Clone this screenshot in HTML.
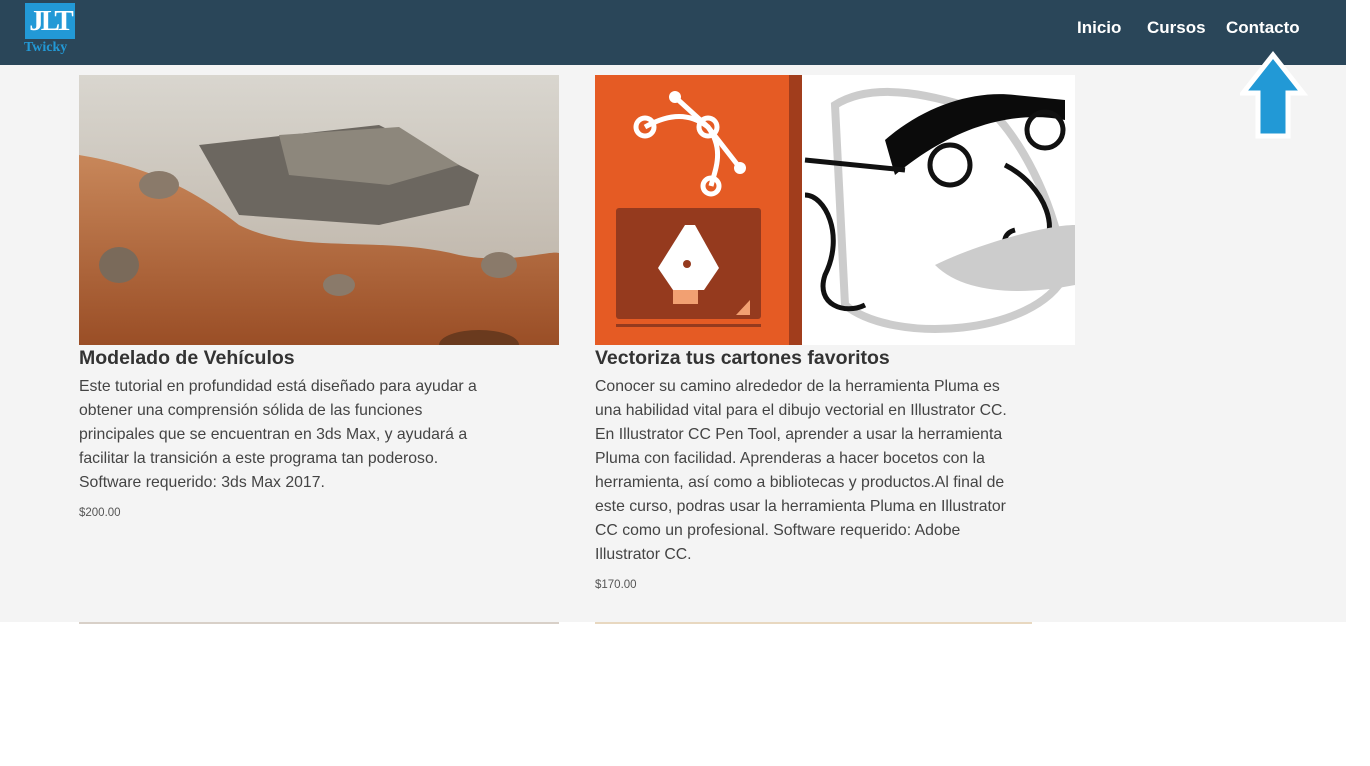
<!DOCTYPE html>
<html><head><meta charset="utf-8"><style>
html,body{margin:0;padding:0;width:1370px;height:766px;overflow:hidden;background:#fff;font-family:"Liberation Sans",sans-serif}
.hdr{position:absolute;left:0;top:0;width:1346px;height:65px;background:#2a4659}
.main{position:absolute;left:0;top:65px;width:1346px;height:557px;background:#f4f4f4}
.nav a{position:absolute;top:18px;color:#fff;font-weight:bold;font-size:17px;text-decoration:none}
.card{position:absolute;top:75px;width:480px}
.img{width:480px;height:270px;overflow:hidden}
h2{margin:0;font-size:19.5px;font-weight:bold;color:#333;position:absolute;top:272px;white-space:nowrap}
p{margin:0;position:absolute;top:300px;font-size:15.8px;line-height:24px;color:#444;white-space:nowrap}
.pr{position:absolute;font-size:11.5px;color:#555}
</style></head><body>
<div class="hdr">
 <div style="position:absolute;left:25px;top:3px;width:50px;height:36px;background:#2299d6"></div>
 <div style="position:absolute;left:25px;top:5px;width:50px;text-align:center;font-family:'Liberation Serif',serif;font-weight:bold;font-size:29px;color:#fff;letter-spacing:-3px">JLT</div>
 <div style="position:absolute;left:24px;top:40px;font-family:'Liberation Serif',serif;font-weight:bold;font-size:14px;color:#2299d6">Twicky</div>
 <div class="nav"><a style="left:1077px">Inicio</a><a style="left:1147px">Cursos</a><a style="left:1226px">Contacto</a></div>
</div>
<div class="main"></div>
<svg style="position:absolute;left:1240px;top:50px" width="70" height="90"><polygon points="33,5 63,43 48,43 48,86 18,86 18,43 3,43" fill="#2299d6" stroke="#fff" stroke-width="5" stroke-linejoin="miter"/></svg>

<div class="card" style="left:79px">
 <div class="img"><svg width="480" height="270">
  <defs><linearGradient id="s" x1="0" y1="0" x2="0" y2="1"><stop offset="0" stop-color="#d9d6cf"/><stop offset="1" stop-color="#b8ada0"/></linearGradient>
  <linearGradient id="g" x1="0" y1="0" x2="0" y2="1"><stop offset="0" stop-color="#c8875a"/><stop offset="1" stop-color="#9a4e26"/></linearGradient></defs>
  <rect width="480" height="270" fill="url(#s)"/>
  <path d="M0,80 C60,90 110,110 160,150 C220,180 300,160 380,180 C430,190 470,175 480,178 L480,270 L0,270Z" fill="url(#g)"/>
  <path d="M120,70 L300,50 L400,100 L390,130 L300,150 L160,140Z" fill="#6c6760"/>
  <path d="M200,60 L320,52 L380,90 L310,110 L210,100Z" fill="#8d877c"/>
  <ellipse cx="400" cy="270" rx="40" ry="15" fill="#6a3a1e"/>
  <ellipse cx="420" cy="190" rx="18" ry="13" fill="#8a7a6a"/><ellipse cx="260" cy="210" rx="16" ry="11" fill="#8a7a6a"/><ellipse cx="80" cy="110" rx="20" ry="14" fill="#8a7a6a"/><ellipse cx="40" cy="190" rx="20" ry="18" fill="#7a6a5a"/>
 </svg></div>
 <h2>Modelado de Vehículos</h2>
 <p>Este tutorial en profundidad está diseñado para ayudar a<br>obtener una comprensión sólida de las funciones<br>principales que se encuentran en 3ds Max, y ayudará a<br>facilitar la transición a este programa tan poderoso.<br>Software requerido: 3ds Max 2017.</p>
 <div class="pr" style="top:432px">$200.00</div>
</div>

<div class="card" style="left:595px">
 <div class="img"><svg width="480" height="270">
  <rect width="480" height="270" fill="#fff"/>
  <rect width="207" height="270" fill="#e55b24"/>
  <rect x="194" width="13" height="270" fill="#a13d1c"/>
  <rect x="21" y="133" width="145" height="111" rx="3" fill="#953a1e"/>
  <rect x="21" y="249" width="145" height="3" fill="#953a1e"/>
  <g fill="none" stroke="#fff" stroke-width="5"><path d="M50,52 C75,38 95,38 113,52 C130,75 120,95 116,111"/><path d="M80,22 L113,52 L145,93"/><circle cx="50" cy="52" r="9"/><circle cx="113" cy="52" r="9"/><circle cx="116" cy="111" r="8"/></g>
  <circle cx="80" cy="22" r="6" fill="#fff"/><circle cx="145" cy="93" r="6" fill="#fff"/>
  <path d="M90,150 L100,150 L124,193 L109,215 L78,215 L63,193Z" fill="#fff"/><rect x="78" y="215" width="25" height="14" fill="#f2a072"/><circle cx="92" cy="189" r="4" fill="#953a1e"/>
  <path d="M155,225 L155,240 L141,240Z" fill="#f2a072"/>
  <path d="M240,30 C280,5 340,20 400,40 C420,60 460,120 470,200 C440,260 300,270 250,230Z" fill="none" stroke="#ccc" stroke-width="8"/>
  <path d="M290,65 C330,30 380,15 420,20 L470,25 L470,45 C420,35 360,50 300,100Z" fill="#0b0b0b"/>
  <circle cx="355" cy="90" r="20" fill="none" stroke="#111" stroke-width="5"/><circle cx="450" cy="55" r="18" fill="none" stroke="#111" stroke-width="5"/>
  <path d="M410,90 C450,110 470,160 440,180 C410,190 400,160 420,155" fill="none" stroke="#111" stroke-width="5"/>
  <path d="M210,85 L310,95 M210,120 C230,120 250,160 230,200 C220,230 250,240 270,230" fill="none" stroke="#111" stroke-width="5"/>
  <path d="M340,190 C380,170 450,150 480,150 L480,210 C430,220 370,220 340,190Z" fill="#ccc"/>
 </svg></div>
 <h2>Vectoriza tus cartones favoritos</h2>
 <p>Conocer su camino alrededor de la herramienta Pluma es<br>una habilidad vital para el dibujo vectorial en Illustrator CC.<br>En Illustrator CC Pen Tool, aprender a usar la herramienta<br>Pluma con facilidad. Aprenderas a hacer bocetos con la<br>herramienta, así como a bibliotecas y productos.Al final de<br>este curso, podras usar la herramienta Pluma en Illustrator<br>CC como un profesional. Software requerido: Adobe<br>Illustrator CC.</p>
 <div class="pr" style="top:504px">$170.00</div>
</div>
<div style="position:absolute;left:79px;top:622px;width:480px;height:2px;background:#d8d0c8"></div>
<div style="position:absolute;left:595px;top:622px;width:437px;height:2px;background:#e8d8c0"></div>
</body></html>
